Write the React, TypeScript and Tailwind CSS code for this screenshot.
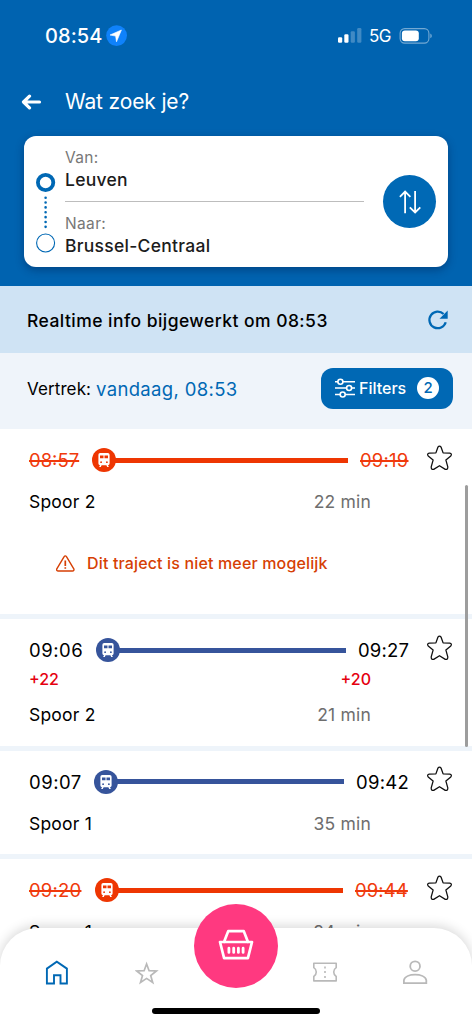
import clsx from "clsx";

type Trip = {
  departure: string;
  arrival: string;
  departureWidth: string;
  arrivalWidth: string;
  departureDelay?: string;
  arrivalDelay?: string;
  platform: string;
  duration: string;
  cancelled?: boolean;
  warning?: string;
  height: string;
};

const trips: Trip[] = [
  {
    departure: "08:57",
    arrival: "09:19",
    departureWidth: "w-[63px] tracking-[0px]",
    arrivalWidth: "w-[49px] tracking-[0.2px]",
    platform: "Spoor 2",
    duration: "22 min",
    cancelled: true,
    warning: "Dit traject is niet meer mogelijk",
    height: "h-[190px]",
  },
  {
    departure: "09:06",
    arrival: "09:27",
    departureWidth: "w-[66.5px] tracking-[0.55px]",
    arrivalWidth: "w-[51px] tracking-[0.2px]",
    departureDelay: "+22",
    arrivalDelay: "+20",
    platform: "Spoor 2",
    duration: "21 min",
    height: "h-[131.5px]",
  },
  {
    departure: "09:07",
    arrival: "09:42",
    departureWidth: "w-[64.5px] tracking-[0.5px]",
    arrivalWidth: "w-[53px] tracking-[0.3px]",
    platform: "Spoor 1",
    duration: "35 min",
    height: "h-[108.5px]",
  },
  {
    departure: "09:20",
    arrival: "09:44",
    departureWidth: "w-[66px] tracking-[0.2px]",
    arrivalWidth: "w-[54px] tracking-[0.1px]",
    platform: "Spoor 1",
    duration: "24 min",
    cancelled: true,
    height: "h-[165px]",
  },
];

function StatusBar() {
  return (
    <div className="flex h-[72px] items-center pl-[45px] pr-[39px] text-white">
      <span className="w-[61px] whitespace-nowrap text-[20px] font-medium leading-6 tracking-[0.1px]">08:54</span>
      <svg className="size-[22px]" viewBox="0 0 22 22">
        <circle cx="10.6" cy="10.6" r="10.4" fill="#0f82fb" />
        <path d="M15.4 5 4 10l5.6 1.1.9 5.7z" fill="#fff" stroke="#fff" strokeWidth="0.6" strokeLinejoin="round" />
      </svg>
      <svg className="ml-auto h-4 w-[25px]" viewBox="0 0 25 16" fill="#fff">
        <rect x="1" y="9.2" width="4.2" height="5.5" rx="1.2" />
        <rect x="7.3" y="6.2" width="4.2" height="8.5" rx="1.2" />
        <rect x="13.7" y="3.2" width="4.2" height="11.5" rx="1.2" opacity="0.25" />
        <rect x="20.2" y="0" width="4.2" height="14.7" rx="1.2" opacity="0.25" />
      </svg>
      <span className="ml-[7px] w-[22px] whitespace-nowrap text-[17px] leading-5 tracking-[-0.6px]">5G</span>
      <svg className="ml-[8px] h-4 w-[34px]" viewBox="0 0 34 16">
        <rect x="1.1" y="0.6" width="28.8" height="14.5" rx="4.6" fill="none" stroke="#fff" strokeOpacity="0.45" strokeWidth="1.1" />
        <rect x="2.9" y="2.4" width="16.9" height="10.9" rx="3" fill="#fff" />
        <path d="M31.4 5.4c1.8.8 1.8 4 0 4.8z" fill="#fff" opacity="0.5" />
      </svg>
    </div>
  );
}

function SearchCard() {
  return (
    <div className="mx-6 flex h-[131px] rounded-xl bg-white shadow-[0_3px_8px_rgba(0,25,70,0.4)]">
      <svg className="ml-3 mt-[35px] h-[84px] w-5" viewBox="0 0 20 84" fill="none" stroke="#0068b4">
        <circle cx="9.6" cy="11.5" r="7.7" strokeWidth="3.8" />
        <path d="M9.6 26.7v31" strokeWidth="2.6" strokeLinecap="round" strokeDasharray="0.01 4.85" />
        <circle cx="9.6" cy="72" r="9" strokeWidth="1.1" />
      </svg>
      <div className="ml-[9px] flex w-[299px] flex-col">
        <div className="flex h-[66px] flex-col border-b border-[#bdbdbd] pt-[12px]">
          <span className="text-[15.5px] leading-5 tracking-[0.35px] text-[#777]">Van:</span>
          <span className="mt-[2px] text-[17.5px] font-medium leading-5 tracking-[0.25px] text-[#1c1c1c]">Leuven</span>
        </div>
        <div className="flex flex-col pt-[12px]">
          <span className="text-[15.5px] leading-5 tracking-[0.35px] text-[#777]">Naar:</span>
          <span className="mt-[2px] whitespace-nowrap text-[17.5px] font-medium leading-5 tracking-[0.27px] text-[#1c1c1c]">
            Brussel-Centraal
          </span>
        </div>
      </div>
      <div className="ml-[19px] mt-[39px] flex size-[53px] items-center justify-center rounded-full bg-[#0069b5]">
        <svg className="size-6" viewBox="0 0 24 24" fill="none" stroke="#fff" strokeWidth="1.8">
          <path d="M7.1 23.3V1.4M1.9 6.8l5.2-5.2 5.3 5.2M17.1.9v21.8M11.8 17.3l5.3 5.2 5.2-5.2" />
        </svg>
      </div>
    </div>
  );
}

function TrainIcon({ color }: { color: string }) {
  return (
    <svg className="size-6 shrink-0" viewBox="0 0 24 24">
      <circle cx="12" cy="12" r="12" fill={color} />
      <path
        d="M8.2 4.900h7.600a1.800 1.800 0 0 1 1.800 1.800v8.700a2 2 0 0 1-1.600 1.800l.9 1.800h-1.700l-.8-1.700H9.600l-.8 1.700H7.100l.9-1.800a2 2 0 0 1-1.600-1.800V6.700a1.800 1.800 0 0 1 1.800-1.800z"
        fill="#fff"
      />
      <path d="M8 7.4h3.5v2.8H8zM12.5 7.4H16v2.8h-3.5z" fill={color} />
      <circle cx="9.1" cy="14.2" r="0.9" fill={color} />
      <circle cx="14.9" cy="14.2" r="0.9" fill={color} />
    </svg>
  );
}

function StarIcon() {
  return (
    <svg className="h-[26px] w-[27px]" viewBox="0 0 27 26" fill="none" stroke="#111" strokeWidth="1.3" strokeLinejoin="round">
      <path d="M11.9 2.2Q13.5 0 15.1 2.2L17.1 7.9 23.7 8.2Q26.4 8.7 24.8 10.9L19.9 15.1 21.8 21.9Q22 24.9 19.3 24.4L13.5 20.7 7.7 24.4Q5 24.9 5.2 21.9L7.1 15.1 2.2 10.9Q.6 8.7 3.3 8.2L9.9 7.9Z" />
    </svg>
  );
}

function TripRow({ trip }: { trip: Trip }) {
  const timeClass = trip.cancelled ? "text-[#f03a0c] line-through decoration-[1.5px]" : "text-black";

  return (
    <div className={clsx("flex shrink-0 flex-col border-b-5 border-[#eef4fa] bg-white pl-[29px] pt-[15px]", trip.height)}>
      <div className="flex h-8 items-center">
        <span className={clsx("shrink-0 whitespace-nowrap text-[18.5px] leading-6", trip.departureWidth)}>
          <span className={timeClass}>{trip.departure}</span>
        </span>
        <TrainIcon color={trip.cancelled ? "#ee3602" : "#36549b"} />
        <div className={clsx("-ml-px mr-3 h-[5px] flex-1", trip.cancelled ? "bg-[#ee3602]" : "bg-[#36549b]")} />
        <span className={clsx("shrink-0 whitespace-nowrap text-[18.5px] leading-6", trip.arrivalWidth)}>
          <span className={timeClass}>{trip.arrival}</span>
        </span>
        <div className="-mt-[5px] ml-[16.5px] mr-[19.5px]">
          <StarIcon />
        </div>
      </div>
      {trip.departureDelay && (
        <div className="flex h-[23px] items-center justify-between pr-[101px] pt-[3px] text-[16px] font-medium leading-5 text-[#e5000f]">
          <span>{trip.departureDelay}</span>
          <span>{trip.arrivalDelay}</span>
        </div>
      )}
      <div className="mt-[14px] flex justify-between pr-[101px] text-[17.5px] leading-6 tracking-[0.2px]">
        <span className="text-black">{trip.platform}</span>
        <span className="text-[#6e6e6e]">{trip.duration}</span>
      </div>
      {trip.warning && (
        <div className="mt-[37px] flex items-center pl-[27px] text-[#d63f04]">
          <svg className="h-[17px] w-[19px]" viewBox="0 0 19 17" fill="none" stroke="currentColor" strokeWidth="1.4" strokeLinejoin="round">
            <path d="M8 1.8q1.3-1.8 2.6 0l7.2 12q.7 2-1.5 2.2h-14q-2.200-.2-1.500-2.200z" />
            <path d="M9.3 5.6v5.3M9.3 12.2v1.5" strokeWidth="1.7" />
          </svg>
          <span className="ml-[12px] whitespace-nowrap text-[16px] font-medium leading-6 tracking-[0.15px]">{trip.warning}</span>
        </div>
      )}
    </div>
  );
}

function BottomNav() {
  return (
    <div className="absolute inset-x-0 bottom-0 h-[96px] rounded-t-[38px] bg-white shadow-[0_-2px_12px_rgba(0,0,0,0.16)]">
      <div className="flex pl-[45px] pt-[32px] text-[#b9b9b9]">
        <svg className="h-[25px] w-6" viewBox="0 0 24 25" fill="none" stroke="#0068b4" strokeWidth="1.9">
          <path d="M1.9 8.6 11.8 1.700l10.100 6.900v14.900h-6.400v-8.200H9v8.200H1.900z" />
        </svg>
        <svg className="ml-[66px] h-[25px] w-6" viewBox="0 0 24 25" fill="none" stroke="currentColor" strokeWidth="1.7">
          <path d="m11.6 4 2.5 6.700 7.300.3-5.700 4.500 2 7-6.100-4.100-6.100 4.100 2-7-5.700-4.500 7.300-.3z" />
        </svg>
        <svg className="ml-[153px] h-[25px] w-[26px]" viewBox="0 0 26 25" fill="none" stroke="currentColor" strokeWidth="1.6">
          <path d="M1.800 3.300h22.400v4.300c-3.300 2.100-3.300 6.800 0 8.900v4.400H1.800v-4.400c3.300-2.100 3.300-6.800 0-8.900z" strokeLinejoin="round" />
          <path d="M13 6.600v2M13 11.100v2M13 16.100v2" />
        </svg>
        <svg className="ml-[64px] h-[25px] w-[26px]" viewBox="0 0 26 25" fill="none" stroke="currentColor" strokeWidth="1.8">
          <circle cx="13.1" cy="6.2" r="4.9" />
          <path d="M1.900 23.100v-3c1.600-7.200 20.800-7.200 22.400 0v3z" />
        </svg>
      </div>
      <div className="absolute left-[152px] top-[80px] h-[6px] w-[168px] rounded-full bg-black" />
      <div className="absolute -top-[24px] left-[194px] flex size-[84px] items-center justify-center rounded-full bg-[#ff3980]">
        <svg className="-mt-[2px] h-8 w-9" viewBox="0 0 36 32" fill="none" stroke="#fff" strokeWidth="2.700" strokeLinejoin="round" strokeLinecap="round">
          <path d="M6 13 10.200 2.200h15.600L30 13M2 13h32l-4.100 16.200H6.100z" />
          <path d="M10.900 19.200v4.200M15.700 19.200v4.200M20.400 19.200v4.200M25.100 19.200v4.200" strokeWidth="2.800" />
        </svg>
      </div>
    </div>
  );
}

export default function App() {
  return (
    <div className="relative flex h-[1024px] w-[472px] flex-col overflow-hidden bg-white font-['Inter',sans-serif]">
      <header className="h-[286px] shrink-0 bg-[#0063b0]">
        <StatusBar />
        <div className="flex h-[64px] items-center pb-1 pl-[21px] text-white">
          <svg className="h-4 w-[21px]" viewBox="0 0 21 16" fill="none" stroke="#fff" strokeWidth="3.2" strokeLinecap="round" strokeLinejoin="round">
            <path d="M8.5 2.2 2.500 8l6 5.900M3 8h15.500" />
          </svg>
          <h1 className="ml-[23px] text-[21px] leading-7 tracking-[-0.15px]">Wat zoek je?</h1>
        </div>
        <SearchCard />
      </header>
      <div className="flex h-[67px] shrink-0 items-center bg-[#cfe3f4] pl-[27px] pr-[23px] pt-[2px]">
        <span className="whitespace-nowrap text-[17.5px] font-medium leading-6 tracking-[0.45px] text-black">
          Realtime info bijgewerkt om 08:53
        </span>
        <svg className="-mt-px ml-auto size-[22px]" viewBox="0 0 22 22">
          <path d="M18.7 13.2A8.3 8.3 0 1 1 16.6 5" fill="none" stroke="#0068b4" strokeWidth="2.3" />
          <path d="M20.7 1.500v8.200h-8.200z" fill="#0068b4" />
        </svg>
      </div>
      <div className="flex h-[76px] shrink-0 items-center bg-[#eff4fa] pb-[5px] pl-[27px] pr-[19px]">
        <span className="w-[64px] whitespace-nowrap text-[17px] leading-6 tracking-[0.1px] text-black">Vertrek:</span>
        <span className="ml-[5px] whitespace-nowrap text-[18.5px] leading-6 tracking-[0.35px] text-[#0068b4]">vandaag, 08:53</span>
        <div className="ml-auto flex h-[41px] w-[132px] items-center rounded-xl bg-[#0068b4] pb-px pl-[14px] text-white">
          <svg className="size-5" viewBox="0 0 20 20" fill="none" stroke="#fff" strokeWidth="1.6">
            <path d="M0 3.800h3M8 3.800h12M0 10h11.500M17 10h3M0 16.500h5M10.500 16.500H20" />
            <circle cx="5.4" cy="3.8" r="2.5" />
            <circle cx="14.1" cy="10" r="2.5" />
            <circle cx="7.7" cy="16.5" r="2.5" />
          </svg>
          <span className="ml-1 w-[58px] whitespace-nowrap text-[16px] font-medium leading-5">Filters</span>
          <span className="flex size-[22px] items-center justify-center rounded-full bg-white text-[15px] font-medium leading-5 text-[#0068b4]">2</span>
        </div>
      </div>
      {trips.map((trip) => (
        <TripRow key={trip.departure} trip={trip} />
      ))}
      <div className="absolute left-[465px] top-[485px] h-[262px] w-[3px] rounded-full bg-[#9d9d9d]" />
      <BottomNav />
    </div>
  );
}
